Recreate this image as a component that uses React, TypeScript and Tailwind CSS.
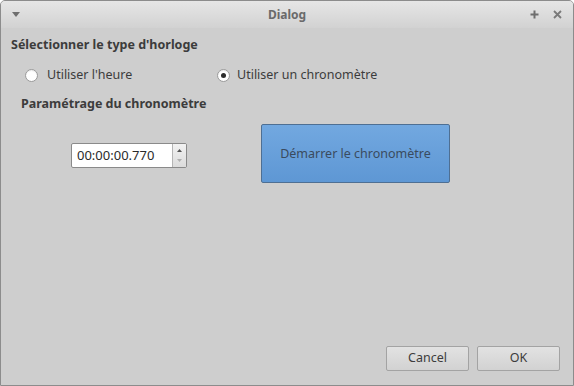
import React from 'react';

const Radio = ({ checked }: { checked?: boolean }) => (
  <span className="w-[13px] h-[13px] rounded-full bg-white border border-[#9a9a9a] flex items-center justify-center shadow-[inset_0_1px_1px_rgba(0,0,0,0.08)]">
    {checked && <span className="w-[5px] h-[5px] rounded-full bg-[#2b2b2b]" />}
  </span>
);

const App: React.FC = () => {
  return (
    <div
      className="w-[574px] h-[386px] flex flex-col bg-[#cecece] border border-[#8c8c8c] rounded-t-[5px] overflow-hidden text-[#3c3c3c] text-[12.5px]"
      style={{ fontFamily: '"Noto Sans", "Open Sans", sans-serif' }}
    >
      {/* Title bar */}
      <div className="h-[27px] shrink-0 flex items-center px-[10px] bg-gradient-to-b from-[#e6e6e6] to-[#d2d2d2]">
        <div className="w-[40px] flex items-center">
          <svg width="8" height="5" viewBox="0 0 8 5" className="ml-[1px]">
            <path d="M0 0 H8 L4 5 Z" fill="#6e6e6e" />
          </svg>
        </div>
        <div className="flex-1 text-center font-bold text-[12px] text-[#6a6a6a]">Dialog</div>
        <div className="w-[40px] flex items-center justify-end gap-[14px] pr-[1px]">
          <svg width="9" height="9" viewBox="0 0 9 9">
            <path d="M4.5 0.5 V8.5 M0.5 4.5 H8.5" stroke="#6e6e6e" strokeWidth="2" />
          </svg>
          <svg width="9" height="9" viewBox="0 0 9 9">
            <path d="M1 1 L8 8 M8 1 L1 8" stroke="#7a7a7a" strokeWidth="1.8" />
          </svg>
        </div>
      </div>

      {/* Body */}
      <div className="flex-1 flex flex-col pl-[10px] pr-[12px]">
        <div className="mt-[8px] font-bold">Sélectionner le type d'horloge</div>

        <div className="mt-[11px] flex items-center pl-[14px]">
          <label className="w-[192px] flex items-center gap-[9px]">
            <Radio />
            <span>Utiliser l'heure</span>
          </label>
          <label className="flex items-center gap-[7px]">
            <Radio checked />
            <span>Utiliser un chronomètre</span>
          </label>
        </div>

        <div className="mt-[10px] pl-[10px] font-bold">Paramétrage du chronomètre</div>

        <div className="mt-[11px] flex items-start">
          <div className="w-[250px] pt-[19px] pl-[60px]">
            <div className="w-[116px] h-[25px] flex border border-[#8a8a8a] rounded-[2px] bg-white overflow-hidden">
              <div className="flex-1 flex items-center pl-[5px] text-[13px] text-[#2a2a2a]">00:00:00.770</div>
              <div className="w-[14px] flex flex-col items-center justify-center gap-[7px] border-l border-[#b5b5b5] bg-gradient-to-b from-[#f2f2f2] to-[#dcdcdc]">
                <svg width="5" height="3" viewBox="0 0 5 3">
                  <path d="M0 3 L2.5 0 L5 3 Z" fill="#555" />
                </svg>
                <svg width="5" height="3" viewBox="0 0 5 3">
                  <path d="M0 0 L5 0 L2.5 3 Z" fill="#b0b0b0" />
                </svg>
              </div>
            </div>
          </div>
          <button className="w-[189px] h-[59px] pt-[2px] rounded-[2px] border border-[#4e6f93] bg-gradient-to-b from-[#72a8e0] to-[#5e97d4] text-[#3a4b5e] text-[12.5px]">
            Démarrer le chronomètre
          </button>
        </div>

        <div className="flex-1" />

        <div className="mb-[14px] flex justify-end gap-[8px] pr-[1px]">
          <button className="w-[83px] h-[25px] rounded-[2px] border border-[#a3a3a3] bg-gradient-to-b from-[#e2e2e2] to-[#d2d2d2] text-[#3c3c3c]">
            Cancel
          </button>
          <button className="w-[83px] h-[25px] rounded-[2px] border border-[#a3a3a3] bg-gradient-to-b from-[#e2e2e2] to-[#d2d2d2] text-[#3c3c3c]">
            OK
          </button>
        </div>
      </div>
    </div>
  );
};

export default App;
